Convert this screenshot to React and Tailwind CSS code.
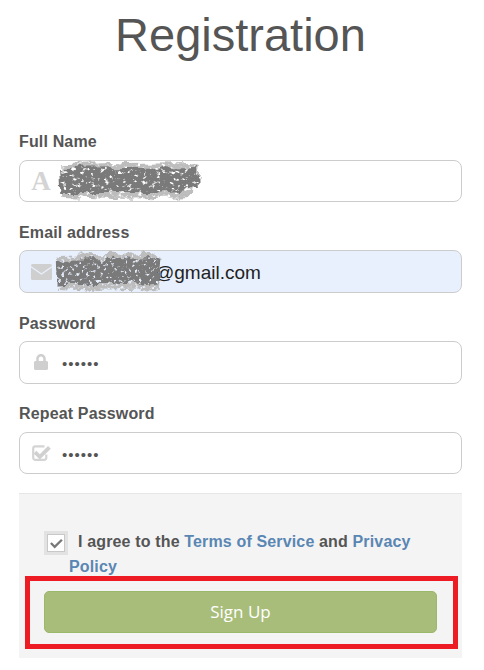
import React from 'react';
import { FaLock } from 'react-icons/fa';

const Scribble = ({ id, className, seed }) => (
  <svg className={className} viewBox="0 0 145 44" preserveAspectRatio="none">
    <defs>
      <filter id={id} x="-5%" y="-15%" width="110%" height="130%">
        <feTurbulence type="fractalNoise" baseFrequency="0.07" numOctaves="3" seed={seed} result="noise" />
        <feDisplacementMap in="SourceGraphic" in2="noise" scale="12" result="shape" />
        <feTurbulence type="fractalNoise" baseFrequency="0.22 0.3" numOctaves="3" seed={seed} />
        <feColorMatrix values="0 0 0 0 0  0 0 0 0 0  0 0 0 0 0  -6 0 0 0 4.5" result="specks" />
        <feComposite in="shape" in2="specks" operator="in" />
      </filter>
    </defs>
    <g filter={`url(#${id})`} fill="#7a7a7a">
      <path fill="#bdbdbd" d="M6 5 L130 3 L142 8 L138 39 L60 41 L8 39z" />
      <path d="M5 10 L140 8 L141 31 L100 35 L6 35z" />
    </g>
  </svg>
);

const EnvelopeIcon = () => (
  <svg viewBox="0 0 21 16" className="h-4 w-[21px] fill-[#cfcfcf]">
    <path d="M1.5 0h18A1.5 1.5 0 0 1 21 1.5v.6L10.5 9.2 0 2.1v-.6A1.5 1.5 0 0 1 1.5 0z" />
    <path d="M0 3.6 10.5 10.7 21 3.6v10.9a1.5 1.5 0 0 1-1.5 1.5h-18A1.5 1.5 0 0 1 0 14.5z" />
  </svg>
);

const CheckSquareIcon = () => (
  <svg viewBox="0 0 19 16" className="h-4 w-[19px]">
    <path d="M12.5 1.4H3.5A2.3 2.3 0 0 0 1.2 3.7v9A2.1 2.1 0 0 0 3.3 14.8h8.9a2.1 2.1 0 0 0 2.1-2.1V9.5" fill="none" stroke="#d4d4d4" strokeWidth="2.2" />
    <path d="M4.4 5.8 7.8 9.2 16 1 18.8 3.8 7.8 14.6 1.7 8.5z" fill="#d0d0d0" />
  </svg>
);

const Field = ({ label, icon, value, dots, autofill, tall, className, children }) => (
  <div className={className}>
    <label className={`block text-base font-bold tracking-[0.15px] text-[#555555] ${tall ? 'leading-[22px]' : 'leading-5'}`}>{label}</label>
    <div className={`relative flex items-center rounded-lg border border-[#cccccc] ${tall ? 'mt-[6px] h-[43px]' : 'mt-2 h-[42px]'} ${autofill ? 'bg-[#e8f0fe]' : 'bg-white'}`}>
      <span className="flex w-[42px] shrink-0 justify-center">{icon}</span>
      {dots && <span className="mt-[2px] text-[15px] leading-none tracking-[1px] text-[#555555]">••••••</span>}
      {value && <span className="ml-[93px] mt-1 text-[19px] text-[#222222]">{value}</span>}
      {children}
    </div>
  </div>
);

export default function App() {
  return (
    <div className="h-[670px] w-[484px] overflow-hidden bg-white font-['Liberation_Sans',sans-serif]">
      <h1 className="pr-[3px] pt-[6px] text-center text-[47px] font-normal leading-[58px] text-[#555555]">Registration</h1>

      <form className="mx-[19px] mt-[68px] w-[443px]">
        <Field
          label="Full Name"
          icon={<span className="font-['Liberation_Serif',serif] text-[27px] font-bold leading-none text-[#d4d4d4]">A</span>}
        >
          <Scribble id="blur-name" seed="4" className="absolute left-[33px] top-[-3px] h-11 w-[150px]" />
        </Field>

        <Field label="Email address" autofill tall value="@gmail.com" icon={<EnvelopeIcon />} className="mt-5">
          <Scribble id="blur-email" seed="9" className="absolute left-[31px] top-[-1px] h-11 w-[112px]" />
        </Field>

        <Field label="Password" dots tall icon={<FaLock className="mb-[2px] h-4 w-[14px] text-[#cfcfcf]" />} className="mt-5" />

        <Field label="Repeat Password" dots icon={<CheckSquareIcon />} className="mt-5" />

        <div className="mt-[19px] h-[165px] border-t border-[#e6e6e6] bg-[#f4f4f4] px-[6px] pt-[35px]">
          <div className="relative ml-[19px] w-[372px] pl-[25px] text-base font-bold leading-[25px] tracking-[0.15px] text-[#555555] [text-indent:9px]">
            <span className="absolute left-0 top-[2px] flex h-6 w-6 items-center justify-center border-[3px] border-[#e2e2e2] bg-white indent-0 shadow-[inset_0_0_0_1px_#c8c8c8]">
              <svg viewBox="0 0 14 12" className="h-[11px] w-[13px] fill-[#777777]">
                <path d="M1.8 4.6 5 7.8 12 1 13.8 2.8 5 11.4 0 6.4z" />
              </svg>
            </span>
            <span>I agree to the </span>
            <a className="text-[#5a86b3]">Terms of Service</a>
            <span> and </span>
            <a className="text-[#5a86b3]">Privacy</a>{' '}
            <a className="text-[#5a86b3]">Policy</a>
          </div>

          <div className="mt-[-3px] h-[73px] w-[433px] border-[5px] border-[#ed1c24] pl-[14px] pr-4 pt-[10px]">
            <button
              type="button"
              className="h-[42px] w-full rounded-[5px] border border-[#9cb86b] bg-[#a9bd7b] font-['Open_Sans',sans-serif] text-[17px] text-white"
            >
              Sign Up
            </button>
          </div>
        </div>
      </form>
    </div>
  );
}
